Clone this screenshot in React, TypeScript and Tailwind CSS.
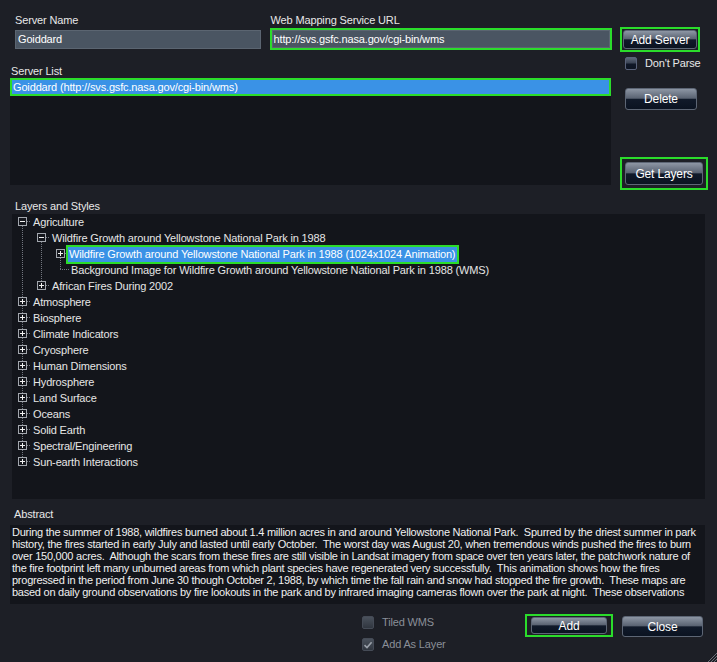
import React from 'react';

const btn =
  'flex items-center justify-center rounded-[3px] border border-[#5d6675] text-[12px] text-white bg-[linear-gradient(to_bottom,#8d96a4_0%,#5a6372_46%,#111a2a_52%,#0b1321_100%)]';

const GREEN = 'border-[#2bdc2b]';

type RowProps = {
  level: number;
  kind: 'plus' | 'minus' | 'leaf';
  guides: boolean[];
  top?: boolean;
  bottom?: boolean;
  label: string;
  selected?: boolean;
};

const TreeRow: React.FC<RowProps> = ({ level, kind, guides, top = true, bottom = true, label, selected }) => {
  const w = 19 + 19 * level;
  const c = 10 + 19 * level;
  return (
    <div className="flex h-[16px] items-center">
      <svg width={w} height={16} className="shrink-0">
        {guides.map((g, i) =>
          g ? (
            <line key={i} x1={10 + 19 * i + 0.5} y1={0} x2={10 + 19 * i + 0.5} y2={16} stroke="#737780" strokeDasharray="1 1" />
          ) : null
        )}
        {top && <line x1={c + 0.5} y1={0} x2={c + 0.5} y2={8} stroke="#737780" strokeDasharray="1 1" />}
        {bottom && <line x1={c + 0.5} y1={8} x2={c + 0.5} y2={16} stroke="#737780" strokeDasharray="1 1" />}
        <line x1={kind === 'leaf' ? c : c + 5} y1={7.5} x2={w} y2={7.5} stroke="#737780" strokeDasharray="1 1" />
        {kind !== 'leaf' && (
          <>
            <rect x={c - 3.5} y={3.5} width={8} height={8} fill="#15171d" stroke="#a3a7ae" />
            <line x1={c - 2} y1={7.5} x2={c + 3} y2={7.5} stroke="#f0f0f0" />
            {kind === 'plus' && <line x1={c + 0.5} y1={5} x2={c + 0.5} y2={10} stroke="#f0f0f0" />}
          </>
        )}
      </svg>
      {selected ? (
        <span className={`-ml-[3px] flex h-[19px] items-center border-2 ${GREEN} bg-[#3a92e6] pl-[1px] pr-[2px] text-white`}>
          {label}
        </span>
      ) : (
        <span className="pl-[2px] text-[#e6e6e6]">{label}</span>
      )}
    </div>
  );
};

const topics = [
  'Atmosphere',
  'Biosphere',
  'Climate Indicators',
  'Cryosphere',
  'Human Dimensions',
  'Hydrosphere',
  'Land Surface',
  'Oceans',
  'Solid Earth',
  'Spectral/Engineering',
  'Sun-earth Interactions',
];

const abstractLines = [
  'During the summer of 1988, wildfires burned about 1.4 million acres in and around Yellowstone National Park.  Spurred by the driest summer in park',
  'history, the fires started in early July and lasted until early October.  The worst day was August 20, when tremendous winds pushed the fires to burn',
  'over 150,000 acres.  Although the scars from these fires are still visible in Landsat imagery from space over ten years later, the patchwork nature of',
  'the fire footprint left many unburned areas from which plant species have regenerated very successfully.  This animation shows how the fires',
  'progressed in the period from June 30 though October 2, 1988, by which time the fall rain and snow had stopped the fire growth.  These maps are',
  'based on daily ground observations by fire lookouts in the park and by infrared imaging cameras flown over the park at night.  These observations',
];

const Check: React.FC<{ checked?: boolean; dim?: boolean }> = ({ checked, dim }) => (
  <div
    className={`flex h-[13px] w-[12px] shrink-0 items-center justify-center rounded-[2px] border ${
      dim
        ? 'border-[#454b56] bg-[linear-gradient(to_bottom,#4a515c,#30363f)]'
        : 'border-[#59627a] bg-[linear-gradient(to_bottom,#5c6678_0%,#3a4354_45%,#0f1727_55%,#0d1422_100%)]'
    }`}
  >
    {checked && (
      <svg width="10" height="10" viewBox="0 0 10 10">
        <path d="M1.5 5.2 L4 7.6 L8.6 2.2" fill="none" stroke="#9ba1aa" strokeWidth="1.6" />
      </svg>
    )}
  </div>
);

export default function App() {
  return (
    <div className="relative flex h-[662px] w-[717px] flex-col overflow-hidden bg-[#1d1f26] font-['Liberation_Sans',Arial,sans-serif] text-[11px] tracking-[-0.15px] text-[#e8e8e8]">
      {/* top section */}
      <div className="flex h-[190px] shrink-0">
        <div className="w-[612px] shrink-0 pl-[10px]">
          <div className="flex pt-[13px]">
            <div className="ml-[5px] w-[246px]">
              <div className="h-[15px] leading-[15px]">Server Name</div>
              <div className="mt-[2px] flex h-[19px] items-center border border-[#5b6571] bg-[#4a5562] px-[2px] text-white">
                Goiddard
              </div>
            </div>
            <div className="ml-[9px] w-[343px]">
              <div className="h-[15px] pl-[1px] leading-[15px]">Web Mapping Service URL</div>
              <div className={`border-2 ${GREEN}`}>
                <div className="flex h-[18px] items-center border border-[#5b6571] bg-[#4a5562] px-[1px] text-white">
                  http://svs.gsfc.nasa.gov/cgi-bin/wms
                </div>
              </div>
            </div>
          </div>
          <div className="mt-[13px] flex h-[15px] items-end pl-[1px] leading-[13px]">Server List</div>
          <div className="h-[107px] w-[601px] bg-[#13151b]">
            <div className={`flex h-[18px] items-center border-2 ${GREEN} bg-[#3a92e6] pl-[1px] text-white`}>
              Goiddard (http://svs.gsfc.nasa.gov/cgi-bin/wms)
            </div>
          </div>
        </div>
        <div className="flex flex-1 flex-col">
          <div className={`ml-[8px] mt-[27px] h-[25px] w-[80px] border-2 ${GREEN} p-px`}>
            <div className={`${btn} h-full w-full`}>Add Server</div>
          </div>
          <div className="ml-[13px] mt-[5px] flex h-[13px] items-center gap-[8px]">
            <Check />
            <span>Don't Parse</span>
          </div>
          <div className={`${btn} ml-[13px] mt-[18px] h-[22px] w-[72px]`}>Delete</div>
          <div className={`ml-[8px] mt-[47px] h-[33px] w-[88px] border-2 ${GREEN} p-[3px]`}>
            <div className={`${btn} h-full w-full`}>Get Layers</div>
          </div>
        </div>
      </div>

      {/* layers */}
      <div className="ml-[15px] mt-[9px] h-[15px] leading-[15px]">Layers and Styles</div>
      <div className="ml-[12px] h-[285px] w-[693px] bg-[#13151b]">
        <TreeRow level={0} kind="minus" guides={[]} top={false} label="Agriculture" />
        <TreeRow level={1} kind="minus" guides={[true]} top={false} label="Wildfire Growth around Yellowstone National Park in 1988" />
        <TreeRow
          level={2}
          kind="plus"
          guides={[true, true]}
          top={false}
          label="Wildfire Growth around Yellowstone National Park in 1988 (1024x1024 Animation)"
          selected
        />
        <TreeRow level={2} kind="leaf" guides={[true, true]} bottom={false} label="Background Image for Wildfire Growth around Yellowstone National Park in 1988 (WMS)" />
        <TreeRow level={1} kind="plus" guides={[true]} bottom={false} label="African Fires During 2002" />
        {topics.map((t, i) => (
          <TreeRow key={t} level={0} kind="plus" guides={[]} bottom={i < topics.length - 1} label={t} />
        ))}
      </div>

      {/* abstract */}
      <div className="ml-[14px] mt-[8px] h-[15px] leading-[15px]">Abstract</div>
      <div className="ml-[10px] mt-[3px] h-[79px] w-[695px] overflow-hidden bg-[#13151b] pl-[2px] pt-[1px] leading-[12px] tracking-[-0.25px] text-[#f0f0f0]">
        {abstractLines.map((l, i) => (
          <div key={i} className="whitespace-pre">
            {l}
          </div>
        ))}
      </div>

      {/* bottom */}
      <div className="flex">
        <div className="ml-[362px] mt-[12px] flex w-[163px] flex-col gap-[9px] leading-[13px] text-[#8a8f98]">
          <div className="flex items-center gap-[8px]">
            <Check dim />
            <span>Tiled WMS</span>
          </div>
          <div className="flex items-center gap-[8px]">
            <Check dim checked />
            <span>Add As Layer</span>
          </div>
        </div>
        <div className={`mt-[10px] h-[23px] w-[88px] border-2 ${GREEN} px-[4px] py-px`}>
          <div className={`${btn} h-full w-full`}>Add</div>
        </div>
        <div className={`${btn} ml-[9px] mt-[12px] h-[21px] w-[81px]`}>Close</div>
      </div>

      <svg className="absolute bottom-0 right-0" width="12" height="12" viewBox="0 0 12 12">
        <line x1="3" y1="12" x2="12" y2="3" stroke="#6c717a" />
        <line x1="6" y1="12" x2="12" y2="6" stroke="#6c717a" />
        <line x1="9" y1="12" x2="12" y2="9" stroke="#6c717a" />
      </svg>
    </div>
  );
}
